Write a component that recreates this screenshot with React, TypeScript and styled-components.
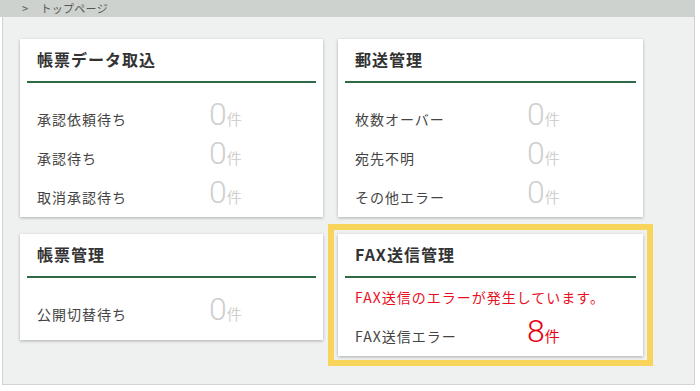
import React from "react";
import styled, { createGlobalStyle } from "styled-components";

type Item = { label: string; count: number };
type Panel = { title: string; items: Item[]; alert?: string };

const panels: Panel[] = [
  {
    title: "帳票データ取込",
    items: [
      { label: "承認依頼待ち", count: 0 },
      { label: "承認待ち", count: 0 },
      { label: "取消承認待ち", count: 0 },
    ],
  },
  {
    title: "郵送管理",
    items: [
      { label: "枚数オーバー", count: 0 },
      { label: "宛先不明", count: 0 },
      { label: "その他エラー", count: 0 },
    ],
  },
  {
    title: "帳票管理",
    items: [{ label: "公開切替待ち", count: 0 }],
  },
  {
    title: "FAX送信管理",
    alert: "FAX送信のエラーが発生しています。",
    items: [{ label: "FAX送信エラー", count: 8 }],
  },
];

const App = () => {
  return (
    <>
      <GlobalStyle />
      <Frame>
        <TopBar>
          <Arrow>&gt;</Arrow>
          <span>トップページ</span>
        </TopBar>
        <Content>
          <Grid>
            {panels.map((p) => (
              <Card key={p.title} $highlight={!!p.alert}>
                <CardHead>
                  <CardTitle>{p.title}</CardTitle>
                </CardHead>
                <Rule />
                <CardBody $alert={!!p.alert}>
                  {p.alert && <Alert>{p.alert}</Alert>}
                  {p.items.map((it) => (
                    <Row key={it.label}>
                      <Label>{it.label}</Label>
                      <Count $alert={it.count > 0}>
                        <Num>{it.count}</Num>
                        <Unit>件</Unit>
                      </Count>
                    </Row>
                  ))}
                </CardBody>
              </Card>
            ))}
          </Grid>
        </Content>
      </Frame>
    </>
  );
};

export default App;

const GlobalStyle = createGlobalStyle`
  body {
    margin: 0;
    background: #ffffff;
    font-family: "Noto Sans CJK JP", "Noto Sans", sans-serif;
  }
`;

const Frame = styled.div`
  width: 695px;
`;

const TopBar = styled.div`
  height: 17px;
  background-color: #cdd2ce;
  display: flex;
  align-items: center;
  padding-left: 22px;
  font-size: 11px;
  letter-spacing: 0.3px;
  color: #555;
  line-height: 17px;
`;

const Arrow = styled.span`
  margin-right: 12px;
`;

const Content = styled.div`
  margin-left: 2px;
  height: 368px;
  background-color: #eff1f0;
  border: 1px solid #d2d4d3;
  border-top: none;
  padding: 22px 0 0 17px;
  box-sizing: border-box;
`;

const Grid = styled.div`
  display: grid;
  grid-template-columns: 303px 305px;
  column-gap: 15px;
  row-gap: 17px;
  align-items: start;
`;

const Card = styled.div<{ $highlight?: boolean }>`
  background-color: #ffffff;
  box-shadow: 0 1px 3px rgba(0, 0, 0, 0.28);
  outline: ${(p) => (p.$highlight ? "6px solid #f8d55a" : "none")};
  outline-offset: 4px;
`;

const CardHead = styled.div`
  padding: 9px 17px 0;
`;

const CardTitle = styled.div`
  font-size: 16px;
  line-height: 22px;
  font-weight: bold;
  letter-spacing: 1px;
  color: #333;
`;

const Rule = styled.div`
  margin: 11px 7px 0;
  height: 2px;
  background-color: #2e6a46;
`;

const CardBody = styled.div<{ $alert?: boolean }>`
  padding: ${(p) => (p.$alert ? "9px 0 2px 17px" : "15px 0 2px 17px")};
  min-height: 62px;
  box-sizing: border-box;
`;

const Alert = styled.div`
  font-size: 14px;
  line-height: 20px;
  letter-spacing: 1px;
  color: #e8101e;
  margin-bottom: 8px;
`;

const Row = styled.div`
  display: flex;
  align-items: baseline;
  height: 39px;
`;

const Label = styled.div`
  width: 172px;
  font-size: 14px;
  line-height: 20px;
  letter-spacing: 1px;
  color: #444;
`;

const Count = styled.div<{ $alert?: boolean }>`
  display: flex;
  align-items: baseline;
  color: ${(p) => (p.$alert ? "#e60012" : "#cfd0cf")};
`;

const Num = styled.span`
  font-family: Roboto, "Liberation Sans", sans-serif;
  font-weight: 300;
  font-size: 32px;
  line-height: 32px;
`;

const Unit = styled.span`
  font-size: 15px;
  line-height: 20px;
`;
